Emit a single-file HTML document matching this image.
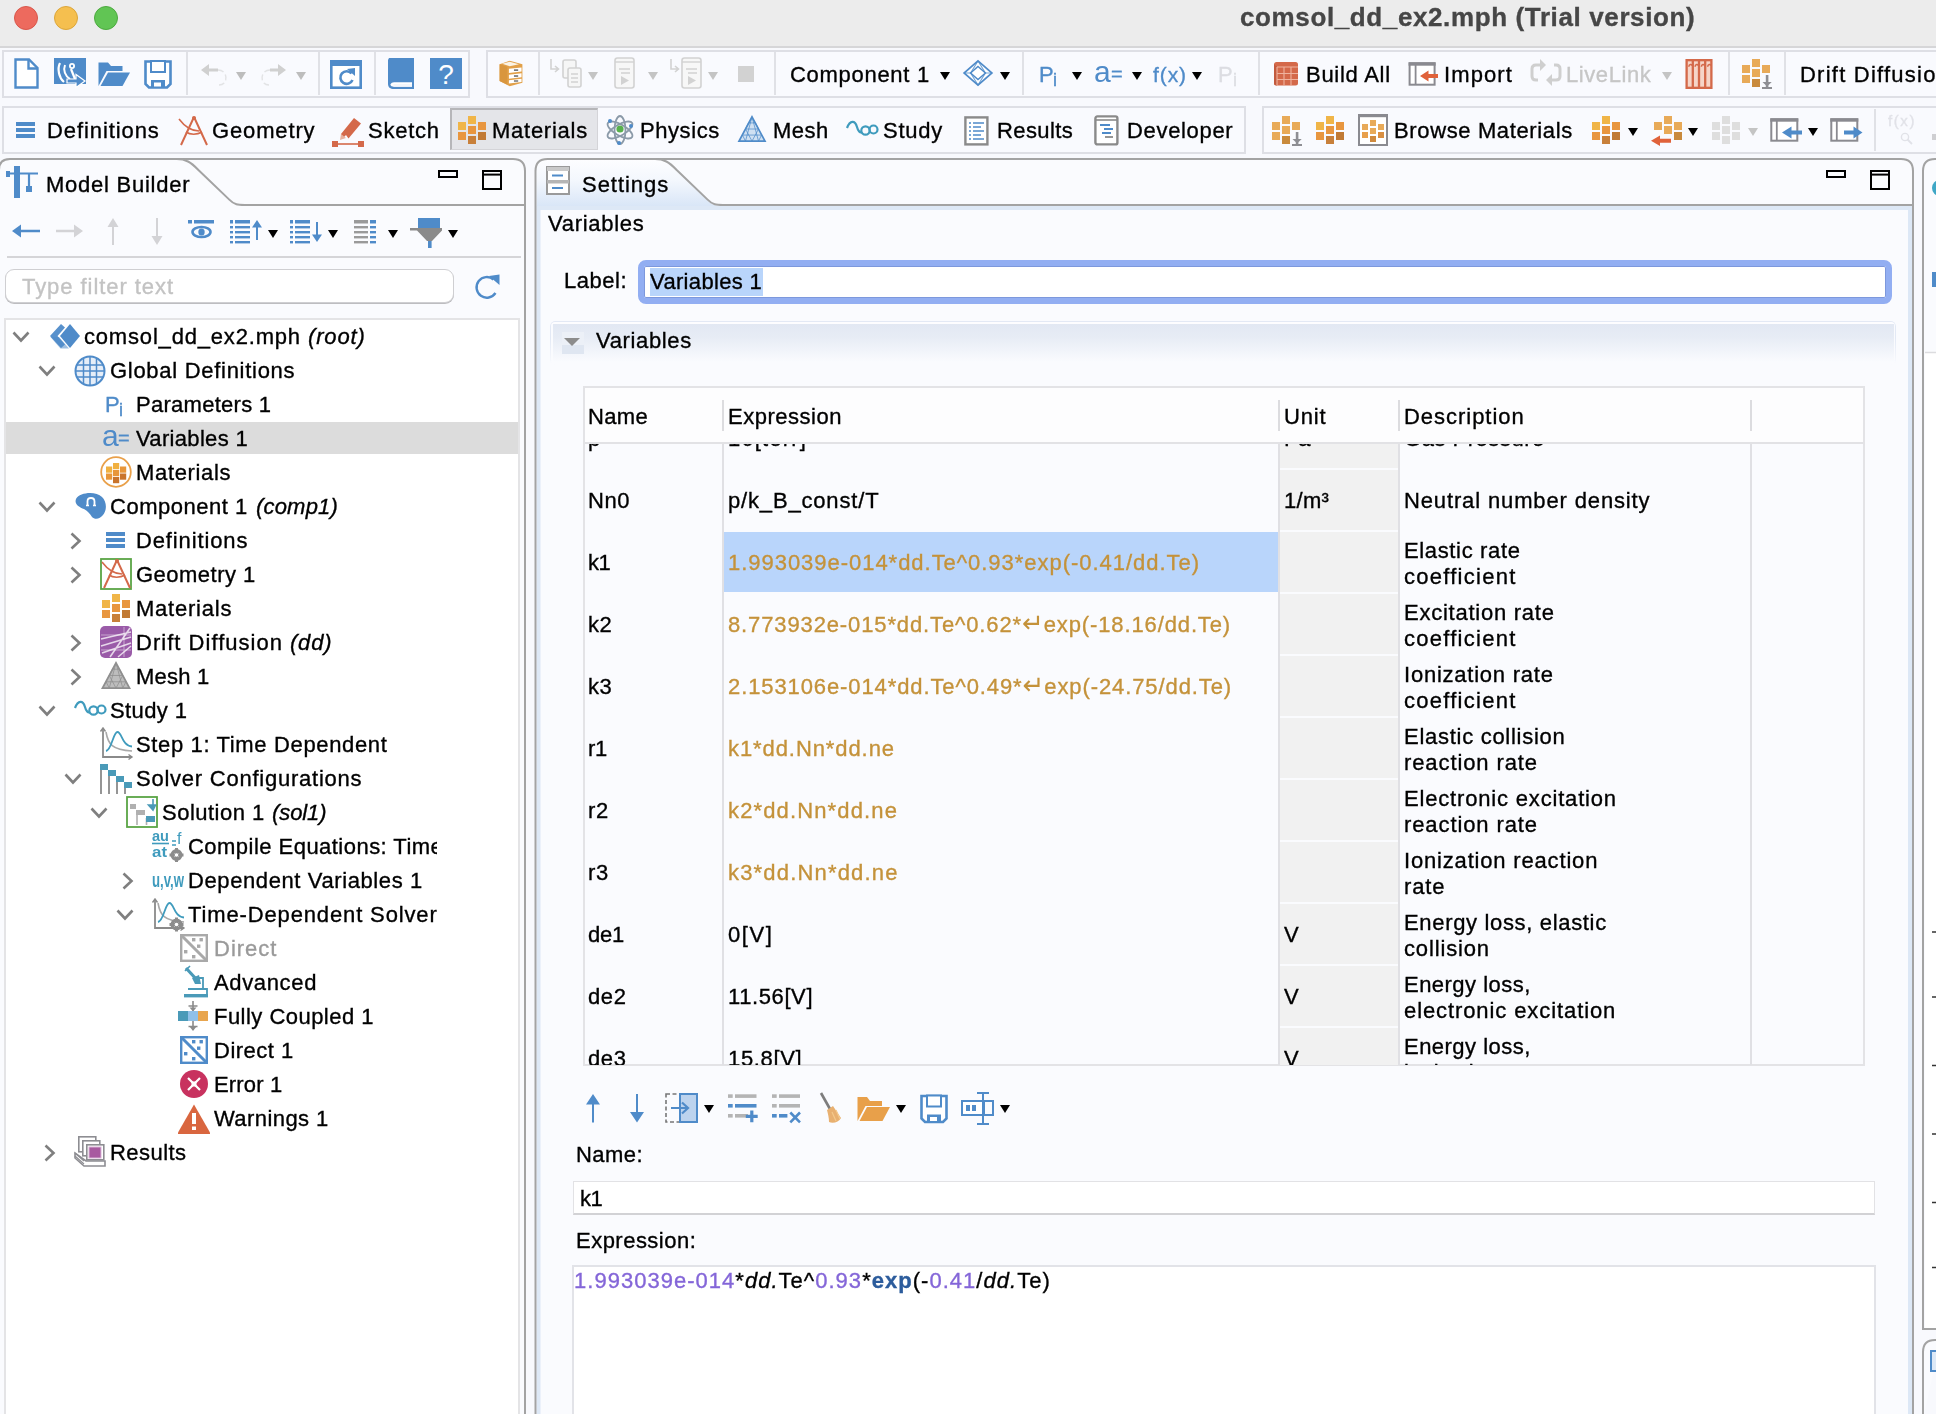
<!DOCTYPE html>
<html><head><meta charset="utf-8"><title>comsol_dd_ex2.mph</title>
<style>html,body{margin:0;padding:0;width:1936px;height:1414px;overflow:hidden;}#root{width:1936px;height:1414px;overflow:hidden;background:#f8f9fd;position:relative;font-family:"Liberation Sans", sans-serif;}.a{position:absolute;}.t{white-space:pre;-webkit-text-stroke:0.35px;will-change:transform;}svg{overflow:visible;display:block;}</style></head>
<body>
<div id="root">
<div class="a" style="left:0px;top:0px;width:1936px;height:46px;background:#ececec;"></div>
<div class="a" style="left:0px;top:46px;width:1936px;height:2px;background:#d6d6d8;"></div>
<div class="a" style="left:14px;top:6px;width:24px;height:24px;background:#ed6a5e;border:1px solid #d9574b;border-radius:50%;box-sizing:border-box;"></div>
<div class="a" style="left:54px;top:6px;width:24px;height:24px;background:#f5bf4f;border:1px solid #dca63a;border-radius:50%;box-sizing:border-box;"></div>
<div class="a" style="left:94px;top:6px;width:24px;height:24px;background:#61c554;border:1px solid #4caa3f;border-radius:50%;box-sizing:border-box;"></div>
<span class="a t" id="t0" style="left:1239.80px;top:-0.01px;font-size:26px;line-height:34px;color:#464646;letter-spacing:0.618px;font-weight:bold;">comsol_dd_ex2.mph (Trial version)</span>
<div class="a" style="left:2px;top:50px;width:468px;height:48px;background:#f9fafe;border:2px solid #dedfe5;box-sizing:border-box;"></div>
<div class="a" style="left:486px;top:50px;width:1470px;height:48px;background:#f9fafe;border:2px solid #dedfe5;box-sizing:border-box;"></div>
<div class="a" style="left:186px;top:52px;width:2px;height:43px;background:#e0e1e6;"></div>
<div class="a" style="left:318px;top:52px;width:2px;height:43px;background:#e0e1e6;"></div>
<div class="a" style="left:374px;top:52px;width:2px;height:43px;background:#e0e1e6;"></div>
<div class="a" style="left:538px;top:52px;width:2px;height:43px;background:#e0e1e6;"></div>
<div class="a" style="left:774px;top:52px;width:2px;height:43px;background:#e0e1e6;"></div>
<div class="a" style="left:1022px;top:52px;width:2px;height:43px;background:#e0e1e6;"></div>
<div class="a" style="left:1258px;top:52px;width:2px;height:43px;background:#e0e1e6;"></div>
<div class="a" style="left:1728px;top:52px;width:2px;height:43px;background:#e0e1e6;"></div>
<div class="a" style="left:1784px;top:52px;width:2px;height:43px;background:#e0e1e6;"></div>
<svg class="a" style="left:10px;top:57px;" width="32" height="32" viewBox="0 0 32 32"><path d="M5.5 2.5H19L27.5 11V30.5H5.5Z" fill="#fff" stroke="#4f8bc9" stroke-width="2.4"/><path d="M18.5 2.5V11.5H27.5" fill="none" stroke="#4f8bc9" stroke-width="2.4"/></svg>
<svg class="a" style="left:54px;top:57px;" width="32" height="32" viewBox="0 0 32 32"><rect x="0" y="1" width="32" height="26" fill="#4f8bc9"/><path d="M6 6C3 12 5 21 10 25" fill="none" stroke="#fff" stroke-width="2.2"/><path d="M11 8C9 13 11 19 16 22" fill="none" stroke="#fff" stroke-width="2"/><circle cx="18" cy="9" r="3" fill="#fff"/><circle cx="18" cy="9" r="1.2" fill="#4f8bc9"/><path d="M17 12L21 22" stroke="#fff" stroke-width="2.2"/><path d="M13 22H22V17.5L31 24L22 30.5V26H13Z" fill="#4f8bc9" stroke="#fff" stroke-width="1.2"/></svg>
<svg class="a" style="left:98px;top:57px;" width="32" height="32" viewBox="0 0 32 32"><path d="M0.5 29V5.5H10L13 9H24.5V14H8.5Z" fill="#4f8bc9"/><path d="M2.5 29L10 15.5H32L24.5 29Z" fill="#4f8bc9"/></svg>
<svg class="a" style="left:142px;top:57px;" width="32" height="32" viewBox="0 0 32 32"><path d="M3.5 4.5H28.5V27L25 30.5H7L3.5 27Z" fill="#fff" stroke="#4f8bc9" stroke-width="2.6"/><rect x="9" y="4" width="14" height="11" fill="#fff" stroke="#4f8bc9" stroke-width="2"/><rect x="9" y="23" width="14" height="7" fill="#4f8bc9"/><rect x="12" y="25.5" width="7" height="4" fill="#fff"/></svg>
<svg class="a" style="left:199px;top:60px;" width="32" height="32" viewBox="0 0 32 32"><path d="M2 10L10 4V8.5H19V11.5H10V16Z" fill="#d0d0d0"/><path d="M19 10C29 10 30 25 20 25" fill="none" stroke="#d0d0d0" stroke-width="1.4" stroke-dasharray="6 3" opacity=".55"/></svg>
<svg class="a" style="left:236px;top:72px;" width="10" height="8" viewBox="0 0 10 8"><path d="M0 0H10L5 8Z" fill="#bdbdbd"/></svg>
<svg class="a" style="left:258px;top:60px;" width="32" height="32" viewBox="0 0 32 32"><path d="M28 10L20 4V8.5H12V11.5H20V16Z" fill="#d0d0d0"/><path d="M12 10C2 10 1 25 11 25" fill="none" stroke="#d0d0d0" stroke-width="1.4" stroke-dasharray="6 3" opacity=".55"/></svg>
<svg class="a" style="left:296px;top:72px;" width="10" height="8" viewBox="0 0 10 8"><path d="M0 0H10L5 8Z" fill="#bdbdbd"/></svg>
<svg class="a" style="left:330px;top:57px;" width="32" height="32" viewBox="0 0 32 32"><rect x="1.3" y="4.3" width="29.4" height="26.4" fill="#fff" stroke="#4f8bc9" stroke-width="2.6"/><rect x="1" y="4" width="30" height="5" fill="#4f8bc9"/><path d="M21.5 16.5A6.3 6.3 0 1 0 22.5 23" fill="none" stroke="#4f8bc9" stroke-width="2.6"/><path d="M17 12L25 11V19Z" fill="#4f8bc9"/></svg>
<svg class="a" style="left:385px;top:57px;" width="32" height="32" viewBox="0 0 32 32"><path d="M4 1H29V32H9C5 32 3 30 3 27V3Z" fill="#4f8bc9"/><path d="M5.5 27.5C6 26 7.5 25.3 9 25.3H27V29.7H9C7 29.7 5.5 29 5.5 27.5Z" fill="#fff"/><rect x="8.5" y="27" width="18.5" height="2.7" fill="#f3f6fb"/></svg>
<svg class="a" style="left:430px;top:57px;" width="32" height="32" viewBox="0 0 32 32"><rect x="0" y="1" width="32" height="31" fill="#4f8bc9"/><text x="16" y="27" font-family="Liberation Sans, sans-serif" font-size="28" fill="#fff" text-anchor="middle">?</text></svg>
<svg class="a" style="left:497px;top:59.5px;" width="28" height="27" viewBox="1 1 29 32"><path d="M2 6L14 2L29 6V28L14 32L2 26Z" fill="#e2a048"/><path d="M2 6L11 9V30L2 26Z" fill="#d9963e"/><path d="M5 5.5L14 3L25 6L14 8.5Z" fill="#fbf3e4"/><path d="M13 11.5L28 9.8V14.5L13 16.5Z M13 18.5L28 16.8V21.3L13 23.3Z M13 25L28 23.2V27L13 28.8Z" fill="#fff"/><rect x="19" y="12" width="5" height="2" fill="#777"/><rect x="19" y="19" width="5" height="2" fill="#777"/><rect x="19" y="25" width="5" height="1.8" fill="#777"/></svg>
<svg class="a" style="left:550px;top:57px;" width="32" height="32" viewBox="0 0 32 32"><path d="M1 2V12H8M5 9L8.5 12L5 15" fill="none" stroke="#d2d2d2" stroke-width="1.6"/><rect x="13" y="3" width="13" height="18" rx="2" fill="#f6f6f6" stroke="#d2d2d2" stroke-width="1.6"/><rect x="18" y="11" width="13" height="19" rx="2" fill="#f6f6f6" stroke="#d2d2d2" stroke-width="1.6"/><path d="M21 17H28M21 21H28M21 25H28" stroke="#d2d2d2" stroke-width="1.4"/></svg>
<svg class="a" style="left:588px;top:72px;" width="10" height="8" viewBox="0 0 10 8"><path d="M0 0H10L5 8Z" fill="#c4c4c4"/></svg>
<svg class="a" style="left:609.5px;top:57px;" width="32" height="32" viewBox="0 0 32 32"><rect x="5" y="1" width="19" height="30" rx="2.5" fill="#f7f7f7" stroke="#d2d2d2" stroke-width="1.6"/><path d="M5 5H24" stroke="#d2d2d2" stroke-width="1.4"/><path d="M9 12H20M11 16H20" stroke="#d2d2d2" stroke-width="1.4"/><path d="M11 19V28L19 23.5Z" fill="#d2d2d2"/></svg>
<svg class="a" style="left:648px;top:72px;" width="10" height="8" viewBox="0 0 10 8"><path d="M0 0H10L5 8Z" fill="#c4c4c4"/></svg>
<svg class="a" style="left:670px;top:57px;" width="32" height="32" viewBox="0 0 32 32"><path d="M1 2V12H8M5 9L8.5 12L5 15" fill="none" stroke="#d2d2d2" stroke-width="1.6"/><rect x="12" y="1" width="19" height="30" rx="2.5" fill="#f7f7f7" stroke="#d2d2d2" stroke-width="1.6"/><path d="M12 5H31" stroke="#d2d2d2" stroke-width="1.4"/><path d="M16 12H27M18 16H27" stroke="#d2d2d2" stroke-width="1.4"/><path d="M18 19V28L26 23.5Z" fill="#d2d2d2"/></svg>
<svg class="a" style="left:708px;top:72px;" width="10" height="8" viewBox="0 0 10 8"><path d="M0 0H10L5 8Z" fill="#c4c4c4"/></svg>
<div class="a" style="left:738px;top:66px;width:16px;height:16px;background:#d2d2d2;"></div>
<span class="a t" id="t1" style="left:790.30px;top:59.88px;font-size:22px;line-height:29px;color:#000;letter-spacing:0.705px;">Component 1</span>
<svg class="a" style="left:940px;top:72px;" width="10" height="8" viewBox="0 0 10 8"><path d="M0 0H10L5 8Z" fill="#000"/></svg>
<svg class="a" style="left:962px;top:60px;" width="32" height="26" viewBox="0 2 32 28"><path d="M16 3L31 16L16 29L1 16Z" fill="#fff" stroke="#4f8bc9" stroke-width="1.8"/><path d="M16 9L24 16L16 23L8 16Z" fill="none" stroke="#4f8bc9" stroke-width="1.6"/><path d="M1 16L8 16M24 16H31M16 3L8 16M16 3L24 16M16 29L8 16M16 29L24 16" stroke="#4f8bc9" stroke-width="1.2" opacity=".8"/></svg>
<svg class="a" style="left:1000px;top:72px;" width="10" height="8" viewBox="0 0 10 8"><path d="M0 0H10L5 8Z" fill="#000"/></svg>
<span class="a t" id="t2" style="left:1038.80px;top:59.88px;font-size:22px;line-height:29px;color:#4f8bc9;letter-spacing:0.000px;">P</span>
<span class="a t" id="t3" style="left:1053.30px;top:69.26px;font-size:18px;line-height:23px;color:#4f8bc9;letter-spacing:0.000px;">i</span>
<svg class="a" style="left:1072px;top:72px;" width="10" height="8" viewBox="0 0 10 8"><path d="M0 0H10L5 8Z" fill="#000"/></svg>
<span class="a t" id="t4" style="left:1094.30px;top:52.10px;font-size:30px;line-height:39px;color:#4f8bc9;letter-spacing:0.000px;-webkit-text-stroke:0;">a</span>
<span class="a t" id="t5" style="left:1111.30px;top:61.07px;font-size:20px;line-height:26px;color:#4f8bc9;letter-spacing:0.000px;">=</span>
<svg class="a" style="left:1132px;top:72px;" width="10" height="8" viewBox="0 0 10 8"><path d="M0 0H10L5 8Z" fill="#000"/></svg>
<span class="a t" id="t6" style="left:1153.30px;top:61.22px;font-size:21px;line-height:27px;color:#4f8bc9;letter-spacing:0.906px;">f(x)</span>
<svg class="a" style="left:1192px;top:72px;" width="10" height="8" viewBox="0 0 10 8"><path d="M0 0H10L5 8Z" fill="#000"/></svg>
<span class="a t" id="t7" style="left:1218.30px;top:59.88px;font-size:22px;line-height:29px;color:#dcdde2;letter-spacing:0.000px;">P</span>
<span class="a t" id="t8" style="left:1232.80px;top:69.26px;font-size:18px;line-height:23px;color:#dcdde2;letter-spacing:0.000px;">i</span>
<svg class="a" style="left:1274.3px;top:62.3px;" width="24" height="24" viewBox="0 0 24 24"><rect x="0" y="0" width="24" height="23.5" rx="2.5" fill="#d4694a"/><path d="M0 2L3 5V23.5H2.5Q0 23.5 0 21Z" fill="#c25a3e"/><path d="M3 5H24M3 11.5H24M3 17.5H24M10 5V23.5M17 5V23.5M3 5V23.5" stroke="#efb39e" stroke-width="1.1" fill="none"/></svg>
<span class="a t" id="t9" style="left:1306.30px;top:59.88px;font-size:22px;line-height:29px;color:#000;letter-spacing:0.732px;">Build All</span>
<svg class="a" style="left:1407px;top:57px;" width="32" height="32" viewBox="0 0 32 32"><rect x="2.6" y="6.3" width="25" height="21.4" fill="#fff" stroke="#8a8a90" stroke-width="2"/><rect x="1.6" y="5.3" width="27" height="3.4" fill="#8a8a90"/><path d="M8.6 8V28" stroke="#8a8a90" stroke-width="1.8"/><path d="M31 17.1H21.5V13.6L13 19.1L21.5 24.6V21.1H31Z" fill="#e0623a"/></svg>
<span class="a t" id="t10" style="left:1444.30px;top:59.88px;font-size:22px;line-height:29px;color:#000;letter-spacing:1.116px;">Import</span>
<svg class="a" style="left:1530px;top:57px;" width="32" height="32" viewBox="0 0 32 32"><path d="M14 8H6Q2 8 2 12V19Q2 23 6 23H8" fill="none" stroke="#cfcfcf" stroke-width="3"/><path d="M10 2L16 8L10 14Z" fill="#cfcfcf"/><path d="M18 23H26Q30 23 30 19V12Q30 8 26 8H24" fill="none" stroke="#cfcfcf" stroke-width="3"/><path d="M22 17L16 23L22 29Z" fill="#cfcfcf"/></svg>
<span class="a t" id="t11" style="left:1566.30px;top:59.88px;font-size:22px;line-height:29px;color:#c6c6c6;letter-spacing:0.571px;">LiveLink</span>
<svg class="a" style="left:1662px;top:72px;" width="10" height="8" viewBox="0 0 10 8"><path d="M0 0H10L5 8Z" fill="#c4c4c4"/></svg>
<svg class="a" style="left:1685px;top:59px;" width="28" height="30" viewBox="0 0 28 31"><rect x="1.2" y="1.2" width="25.6" height="28.6" fill="#f6d5c8" stroke="#d4694a" stroke-width="2.4"/><path d="M7.6 1V30" stroke="#d4694a" stroke-width="2.4"/><path d="M14 1V30" stroke="#d4694a" stroke-width="2.4"/><path d="M20.4 1V30" stroke="#d4694a" stroke-width="2.4"/><path d="M3.5 8C3.5 5 6.5 5 6.5 7" stroke="#d4694a" stroke-width="1.6" fill="none"/><path d="M10 8C10 5 13 5 13 7" stroke="#d4694a" stroke-width="1.6" fill="none"/><path d="M16.5 8C16.5 5 19.5 5 19.5 7" stroke="#d4694a" stroke-width="1.6" fill="none"/><path d="M23 8C23 5 26 5 26 7" stroke="#d4694a" stroke-width="1.6" fill="none"/></svg>
<svg class="a" style="left:1742px;top:59px;" width="32" height="32" viewBox="0 0 32 32"><rect x="0" y="6" width="8" height="8" fill="#e8aa58"/><rect x="0" y="16" width="8" height="8" fill="#e8aa58"/><rect x="10" y="0" width="8" height="8" fill="#e8aa58"/><rect x="10" y="10" width="8" height="8" fill="#e8aa58"/><rect x="10" y="20" width="8" height="8" fill="#c98a3c"/><rect x="20" y="6" width="8" height="8" fill="#e8aa58"/><rect x="23.8" y="16" width="2.6" height="8" fill="#8e8e93"/><path d="M20.5 23H29.7L25.1 27.5Z" fill="#8e8e93"/><rect x="20" y="28" width="10" height="2" fill="#8e8e93"/><rect x="23.8" y="26" width="2.6" height="3" fill="#8e8e93"/></svg>
<span class="a t" id="t12" style="left:1800.30px;top:59.88px;font-size:22px;line-height:29px;color:#000;letter-spacing:1.232px;">Drift Diffusion</span>
<div class="a" style="left:2px;top:106px;width:1244px;height:48px;background:#f9fafe;border:2px solid #dedfe5;box-sizing:border-box;"></div>
<div class="a" style="left:1262px;top:106px;width:700px;height:48px;background:#f9fafe;border:2px solid #dedfe5;box-sizing:border-box;"></div>
<div class="a" style="left:1874px;top:109px;width:2px;height:42px;background:#e0e1e6;"></div>
<div class="a" style="left:450px;top:108px;width:148px;height:42px;background:#e4e5e9;border:1px solid #d4d4d8;box-sizing:border-box;border-top:2px solid #b6b6b9;border-left:2px solid #b6b6b9;"></div>
<svg class="a" style="left:15.5px;top:122px;" width="19" height="16" viewBox="0 0 19 16"><rect x="0" y="0" width="19" height="4" fill="#4f8bc9"/><rect x="0" y="6" width="19" height="4" fill="#4f8bc9"/><rect x="0" y="12" width="19" height="4" fill="#4f8bc9"/></svg>
<span class="a t" id="t13" style="left:46.80px;top:115.88px;font-size:22px;line-height:29px;color:#000;letter-spacing:0.912px;">Definitions</span>
<svg class="a" style="left:177px;top:114.5px;" width="32" height="32" viewBox="0 0 32 32"><path d="M2 4C8 12 14 16 22 16" fill="none" stroke="#d4694a" stroke-width="1.6"/><path d="M17 2L4 30M17 2L30 30" fill="none" stroke="#d4694a" stroke-width="2"/><path d="M9 17C13 20 20 20 25 17" fill="none" stroke="#d4694a" stroke-width="1.6"/><circle cx="17" cy="3" r="2" fill="#d4694a"/></svg>
<span class="a t" id="t14" style="left:212.30px;top:115.88px;font-size:22px;line-height:29px;color:#000;letter-spacing:0.854px;">Geometry</span>
<svg class="a" style="left:332px;top:114.5px;" width="32" height="32" viewBox="0 0 32 32"><path d="M14 20L10 24L9 19L22 3L29 8.5L16.5 23.5Z" fill="#d4694a"/><path d="M9 19L8 25L14 23Z" fill="#e8b29f"/><path d="M3 29H29" stroke="#d4694a" stroke-width="1.6"/><rect x="0" y="26" width="6" height="6" fill="#d4694a"/><rect x="26" y="26" width="6" height="6" fill="#d4694a"/></svg>
<span class="a t" id="t15" style="left:368.10px;top:115.88px;font-size:22px;line-height:29px;color:#000;letter-spacing:0.770px;">Sketch</span>
<svg class="a" style="left:457.5px;top:116px;" width="32" height="32" viewBox="0 0 32 32"><rect x="0" y="6" width="8" height="8" fill="#f0b548"/><rect x="0" y="16" width="8" height="8" fill="#e8963f"/><rect x="10" y="0" width="8" height="8" fill="#f0b548"/><rect x="10" y="10" width="8" height="8" fill="#e8963f"/><rect x="10" y="20" width="8" height="8" fill="#c8803a"/><rect x="20" y="6" width="8" height="8" fill="#e8963f"/><rect x="20" y="16" width="8" height="8" fill="#c17a34"/></svg>
<span class="a t" id="t16" style="left:492.30px;top:115.88px;font-size:22px;line-height:29px;color:#000;letter-spacing:0.735px;">Materials</span>
<svg class="a" style="left:605px;top:114px;" width="30" height="32" viewBox="0 0 30 32"><ellipse cx="15" cy="16" rx="14" ry="5.5" fill="none" stroke="#8b9aa8" stroke-width="1.8" transform="rotate(30 15 16)"/><ellipse cx="15" cy="16" rx="14" ry="5.5" fill="none" stroke="#8b9aa8" stroke-width="1.8" transform="rotate(-30 15 16)"/><ellipse cx="15" cy="16" rx="5.5" ry="14" fill="none" stroke="#8b9aa8" stroke-width="1.8"/><circle cx="15" cy="15" r="3.6" fill="#58b04c"/><circle cx="5" cy="7" r="2" fill="#4f8bc9"/><circle cx="26" cy="12" r="2" fill="#4f8bc9"/><circle cx="14" cy="29" r="2" fill="#4f8bc9"/></svg>
<span class="a t" id="t17" style="left:640.30px;top:115.88px;font-size:22px;line-height:29px;color:#000;letter-spacing:0.570px;">Physics</span>
<svg class="a" style="left:736px;top:116px;" width="32" height="26" viewBox="0 1 32 30"><path d="M16 2L31 30H1Z" fill="#cfe0f2" stroke="#4f8bc9" stroke-width="2"/><path d="M8.5 16H23.5M16 2L8.5 30M16 2L23.5 30M8.5 16L16 30L23.5 16M5 23H27M12 9H20M5 23L8.5 30M27 23L23.5 30M12 9L8.5 16M20 9L23.5 16" stroke="#4f8bc9" stroke-width="1" fill="none" opacity=".85"/></svg>
<span class="a t" id="t18" style="left:773.30px;top:115.88px;font-size:22px;line-height:29px;color:#000;letter-spacing:0.487px;">Mesh</span>
<svg class="a" style="left:846px;top:114px;" width="32" height="32" viewBox="0 0 32 32"><path d="M1 14C4 6 9 6 11 13C12 17 14 19 16 18" fill="none" stroke="#3f9bbd" stroke-width="2.2"/><circle cx="19.5" cy="16.5" r="4.2" fill="none" stroke="#3f9bbd" stroke-width="2.2"/><circle cx="27.5" cy="15.5" r="4" fill="none" stroke="#3f9bbd" stroke-width="2.2"/></svg>
<span class="a t" id="t19" style="left:883.30px;top:115.88px;font-size:22px;line-height:29px;color:#000;letter-spacing:0.719px;">Study</span>
<svg class="a" style="left:964px;top:116px;" width="25" height="30" viewBox="0 0 25 30"><rect x="1.4" y="1.4" width="22" height="27" fill="#fff" stroke="#8a8a8a" stroke-width="2.4"/><path d="M5 7H7M9 7H20" stroke="#4f8bc9" stroke-width="1.6"/><path d="M5 11H7M9 11H17" stroke="#4f8bc9" stroke-width="1.6"/><path d="M5 15H7M9 15H20" stroke="#4f8bc9" stroke-width="1.6"/><path d="M5 19H7M9 19H17" stroke="#4f8bc9" stroke-width="1.6"/><path d="M5 23H7M9 23H20" stroke="#4f8bc9" stroke-width="1.6"/></svg>
<span class="a t" id="t20" style="left:996.80px;top:115.88px;font-size:22px;line-height:29px;color:#000;letter-spacing:0.406px;">Results</span>
<svg class="a" style="left:1094px;top:115px;" width="25" height="31" viewBox="0 0 25 31"><rect x="1.4" y="1.4" width="22" height="28" rx="2" fill="#fff" stroke="#8a8a8a" stroke-width="2.4"/><path d="M1 5H24" stroke="#8a8a8a" stroke-width="1.6"/><path d="M6 10H16M10 14H19M8 18H17" stroke="#4f8bc9" stroke-width="1.8"/><path d="M11 22H19" stroke="#8a8a8a" stroke-width="1.8"/></svg>
<span class="a t" id="t21" style="left:1126.80px;top:115.88px;font-size:22px;line-height:29px;color:#000;letter-spacing:0.673px;">Developer</span>
<svg class="a" style="left:1272px;top:116px;" width="32" height="32" viewBox="0 0 32 32"><rect x="0" y="6" width="8" height="8" fill="#e8aa58"/><rect x="0" y="16" width="8" height="8" fill="#e8aa58"/><rect x="10" y="0" width="8" height="8" fill="#e8aa58"/><rect x="10" y="10" width="8" height="8" fill="#e8aa58"/><rect x="10" y="20" width="8" height="8" fill="#c98a3c"/><rect x="20" y="6" width="8" height="8" fill="#e8aa58"/><rect x="23.8" y="16" width="2.6" height="8" fill="#8e8e93"/><path d="M20.5 23H29.7L25.1 27.5Z" fill="#8e8e93"/><rect x="20" y="28" width="10" height="2" fill="#8e8e93"/><rect x="23.8" y="26" width="2.6" height="3" fill="#8e8e93"/></svg>
<svg class="a" style="left:1316px;top:116px;" width="32" height="32" viewBox="0 0 32 32"><rect x="0" y="6" width="8" height="8" fill="#f0b548"/><rect x="0" y="16" width="8" height="8" fill="#e8963f"/><rect x="10" y="0" width="8" height="8" fill="#f0b548"/><rect x="10" y="10" width="8" height="8" fill="#e8963f"/><rect x="10" y="20" width="8" height="8" fill="#c8803a"/><rect x="20" y="6" width="8" height="8" fill="#e8963f"/><rect x="20" y="16" width="8" height="8" fill="#c17a34"/></svg>
<svg class="a" style="left:1358px;top:114.3px;" width="32" height="32" viewBox="0 0 32 32"><rect x="1" y="1" width="28" height="30" fill="#fff" stroke="#8a8a90" stroke-width="2"/><rect x="0" y="0" width="30" height="3.2" fill="#8a8a90"/><rect x="4" y="10" width="6" height="6" fill="#e8aa58"/><rect x="4" y="18" width="6" height="6" fill="#e8a04c"/><rect x="12" y="6" width="6" height="6" fill="#e8aa58"/><rect x="12" y="14" width="6" height="6" fill="#e8aa58"/><rect x="12" y="22" width="6" height="6" fill="#cf8a3e"/><rect x="20" y="10" width="6" height="6" fill="#e8aa58"/><rect x="20" y="18" width="6" height="6" fill="#d98f42"/></svg>
<span class="a t" id="t22" style="left:1394.30px;top:115.88px;font-size:22px;line-height:29px;color:#000;letter-spacing:0.631px;">Browse Materials</span>
<svg class="a" style="left:1592px;top:116px;" width="32" height="32" viewBox="0 0 32 32"><rect x="0" y="6" width="8" height="8" fill="#f0b548"/><rect x="0" y="16" width="8" height="8" fill="#e8963f"/><rect x="10" y="0" width="8" height="8" fill="#f0b548"/><rect x="10" y="10" width="8" height="8" fill="#e8963f"/><rect x="10" y="20" width="8" height="8" fill="#c8803a"/><rect x="20" y="6" width="8" height="8" fill="#e8963f"/><rect x="20" y="16" width="8" height="8" fill="#c17a34"/></svg>
<svg class="a" style="left:1628px;top:128px;" width="10" height="8" viewBox="0 0 10 8"><path d="M0 0H10L5 8Z" fill="#000"/></svg>
<svg class="a" style="left:1651.5px;top:116px;" width="32" height="32" viewBox="0 0 32 32"><rect x="2" y="6" width="8" height="8" fill="#e8aa58"/><rect x="12" y="0" width="8" height="8" fill="#e8aa58"/><rect x="12" y="10" width="8" height="8" fill="#e8aa58"/><rect x="22" y="6" width="8" height="8" fill="#e8aa58"/><rect x="22" y="16" width="8" height="8" fill="#c98a3c"/><path d="M19 22.7H8V19.5L-1 24.7L8 30V26.7H19Z" fill="#e0623a"/></svg>
<svg class="a" style="left:1688px;top:128px;" width="10" height="8" viewBox="0 0 10 8"><path d="M0 0H10L5 8Z" fill="#000"/></svg>
<svg class="a" style="left:1712px;top:116px;" width="32" height="32" viewBox="0 0 32 32"><rect x="0" y="6" width="8" height="8" fill="#dedede"/><rect x="0" y="16" width="8" height="8" fill="#dedede"/><rect x="10" y="0" width="8" height="8" fill="#dedede"/><rect x="10" y="10" width="8" height="8" fill="#dedede"/><rect x="10" y="20" width="8" height="8" fill="#dedede"/><rect x="20" y="6" width="8" height="8" fill="#dedede"/><rect x="20" y="16" width="8" height="8" fill="#dedede"/></svg>
<svg class="a" style="left:1748px;top:128px;" width="10" height="8" viewBox="0 0 10 8"><path d="M0 0H10L5 8Z" fill="#c4c4c4"/></svg>
<svg class="a" style="left:1770px;top:114px;" width="32" height="32" viewBox="0 0 32 32"><rect x="1.3" y="5.3" width="26" height="21.4" fill="#fff" stroke="#8a8a90" stroke-width="2"/><rect x="0.3" y="4.3" width="28" height="3.4" fill="#8a8a90"/><path d="M6.8 7V27" stroke="#8a8a90" stroke-width="1.8"/><path d="M32 16.4H21.5V12.6L12 18.5L21.5 24.4V20.6H32Z" fill="#4f8bc9"/></svg>
<svg class="a" style="left:1808px;top:128px;" width="10" height="8" viewBox="0 0 10 8"><path d="M0 0H10L5 8Z" fill="#000"/></svg>
<svg class="a" style="left:1830.2px;top:114px;" width="32" height="32" viewBox="0 0 32 32"><rect x="1.3" y="5.3" width="26" height="21.4" fill="#fff" stroke="#8a8a90" stroke-width="2"/><rect x="0.3" y="4.3" width="28" height="3.4" fill="#8a8a90"/><path d="M6.8 7V27" stroke="#8a8a90" stroke-width="1.8"/><path d="M14 16.4H23.5V12.6L32.5 18.5L23.5 24.4V20.6H14Z" fill="#4f8bc9"/></svg>
<span class="a t" id="t23" style="left:1888.30px;top:110.80px;font-size:15px;line-height:20px;color:#e1e2e8;letter-spacing:1.600px;">f(x)</span>
<svg class="a" style="left:1900px;top:132px;" width="14" height="13" viewBox="0 0 14 13"><circle cx="5" cy="5" r="3.6" fill="none" stroke="#e1e2e8" stroke-width="1.4"/><path d="M7.5 7.5L12 12" stroke="#e1e2e8" stroke-width="1.8"/></svg>
<div class="a" style="left:1932px;top:134px;width:6px;height:6px;background:#cfcfd2;"></div>
<svg class="a" style="left:0;top:150px" width="540" height="1270" viewBox="0 150 540 1270"><path d="M-1 1420V170Q-1 159 10 159H513Q525 159 525 171V1420Z" fill="#fafbfe"/><path d="M-1 1420V170Q-1 159 10 159H513Q525 159 525 171V1420" fill="none" stroke="#a3a3a3" stroke-width="2"/><path d="M176.7 159C185.7 159 190.7 162 198.39999999999998 170 L229.29999999999998 199.6 C234.7 205 237.7 205 244.7 205H525" fill="none" stroke="#a3a3a3" stroke-width="2"/></svg>
<svg class="a" style="left:6px;top:166px;" width="32" height="32" viewBox="0 0 32 32"><rect x="8" y="0" width="6" height="32" fill="#4f8bc9"/><rect x="0" y="5" width="4" height="6" fill="#4f8bc9"/><path d="M3 7.5H9" stroke="#4f8bc9" stroke-width="2"/><path d="M14 7.5H32M23 7.5V20" stroke="#4f8bc9" stroke-width="2.2" fill="none"/><rect x="20" y="20" width="6" height="6" fill="#4f8bc9"/></svg>
<span class="a t" id="t24" style="left:46.30px;top:169.88px;font-size:22px;line-height:29px;color:#000;letter-spacing:0.751px;">Model Builder</span>
<svg class="a" style="left:438px;top:168px;" width="70" height="26" viewBox="0 0 70 26"><rect x="1" y="3" width="18" height="6" fill="none" stroke="#000" stroke-width="2"/><rect x="45" y="3" width="18" height="18" fill="none" stroke="#000" stroke-width="2"/><path d="M45 6.6H63" stroke="#000" stroke-width="2"/></svg>
<svg class="a" style="left:10px;top:216px;" width="160" height="34" viewBox="0 0 160 34"><path d="M2 15L11 8.5V13.8H30V16.2H11V21.5Z" fill="#4f8bc9"/><path d="M73 15L64 8.5V13.8H46V16.2H64V21.5Z" fill="#d3d3d6"/><path d="M103 2L97.5 11H102V29H104V11H108.5Z" fill="#d3d3d6"/><path d="M147 29L141.5 20H146V2H148V20H152.5Z" fill="#d3d3d6"/></svg>
<svg class="a" style="left:188px;top:218px;" width="28" height="24" viewBox="0 0 28 24"><rect x="0" y="2" width="4" height="3.5" fill="#4f8bc9"/><rect x="6" y="2" width="20" height="3.5" fill="#4f8bc9"/><ellipse cx="13.5" cy="14" rx="9" ry="5" fill="none" stroke="#4f8bc9" stroke-width="2.6"/><ellipse cx="13.5" cy="14" rx="3.2" ry="3.5" fill="#4f8bc9"/></svg>
<svg class="a" style="left:230px;top:219px;" width="33" height="26" viewBox="0 0 33 26"><rect x="0" y="1" width="3" height="3.5" fill="#4f8bc9"/><rect x="5" y="1" width="15" height="3.5" fill="#4f8bc9"/><rect x="0" y="7" width="3" height="2.4" fill="#4f8bc9"/><rect x="5" y="7" width="15" height="2.4" fill="#4f8bc9"/><rect x="0" y="12" width="3" height="2.4" fill="#4f8bc9"/><rect x="5" y="12" width="15" height="2.4" fill="#4f8bc9"/><rect x="0" y="17" width="3" height="2.4" fill="#4f8bc9"/><rect x="5" y="17" width="15" height="2.4" fill="#4f8bc9"/><rect x="0" y="22" width="3" height="2.4" fill="#4f8bc9"/><rect x="5" y="22" width="15" height="2.4" fill="#4f8bc9"/><path d="M27 1L22 8.5H26V21H28V8.5H32Z" fill="#4f8bc9"/></svg>
<svg class="a" style="left:268px;top:230px;" width="10" height="8" viewBox="0 0 10 8"><path d="M0 0H10L5 8Z" fill="#000"/></svg>
<svg class="a" style="left:290px;top:219px;" width="33" height="26" viewBox="0 0 33 26"><rect x="0" y="1" width="3" height="3.5" fill="#4f8bc9"/><rect x="5" y="1" width="15" height="3.5" fill="#4f8bc9"/><rect x="0" y="7" width="3" height="2.4" fill="#4f8bc9"/><rect x="5" y="7" width="15" height="2.4" fill="#4f8bc9"/><rect x="0" y="12" width="3" height="2.4" fill="#4f8bc9"/><rect x="5" y="12" width="15" height="2.4" fill="#4f8bc9"/><rect x="0" y="17" width="3" height="2.4" fill="#4f8bc9"/><rect x="5" y="17" width="15" height="2.4" fill="#4f8bc9"/><rect x="0" y="22" width="3" height="2.4" fill="#4f8bc9"/><rect x="5" y="22" width="15" height="2.4" fill="#4f8bc9"/><path d="M27 23L22 15.5H26V3H28V15.5H32Z" fill="#4f8bc9"/></svg>
<svg class="a" style="left:328px;top:230px;" width="10" height="8" viewBox="0 0 10 8"><path d="M0 0H10L5 8Z" fill="#000"/></svg>
<svg class="a" style="left:354px;top:219px;" width="24" height="26" viewBox="0 0 24 26"><rect x="0" y="1" width="14" height="3.5" fill="#9a9a9a"/><rect x="16" y="1" width="6" height="3.5" fill="#4f8bc9"/><rect x="0" y="7" width="14" height="2.4" fill="#9a9a9a"/><rect x="16" y="7" width="6" height="2.4" fill="#4f8bc9"/><rect x="0" y="12" width="14" height="2.4" fill="#9a9a9a"/><rect x="16" y="12" width="6" height="2.4" fill="#4f8bc9"/><rect x="0" y="17" width="14" height="2.4" fill="#9a9a9a"/><rect x="16" y="17" width="6" height="2.4" fill="#4f8bc9"/><rect x="0" y="22" width="14" height="2.4" fill="#9a9a9a"/><rect x="16" y="22" width="6" height="2.4" fill="#4f8bc9"/></svg>
<svg class="a" style="left:388px;top:230px;" width="10" height="8" viewBox="0 0 10 8"><path d="M0 0H10L5 8Z" fill="#000"/></svg>
<svg class="a" style="left:410px;top:217px;" width="33" height="32" viewBox="0 0 33 32"><rect x="8" y="1" width="22" height="10" fill="#4f8bc9"/><path d="M0 11H32V13.5L22 24H17L7 13.5H0Z" fill="#8a8a8a"/><rect x="18" y="24" width="3.6" height="7" fill="#4f8bc9"/></svg>
<svg class="a" style="left:448px;top:230px;" width="10" height="8" viewBox="0 0 10 8"><path d="M0 0H10L5 8Z" fill="#000"/></svg>
<div class="a" style="left:7px;top:256px;width:514px;height:2px;background:#d5d5d8;"></div>
<div class="a" style="left:5px;top:269px;width:449px;height:34px;background:#fff;border:1px solid #cfcfd2;border-radius:9px;box-sizing:border-box;box-shadow:0 1px 0 #bdbdc0;"></div>
<span class="a t" id="t25" style="left:22.30px;top:271.88px;font-size:22px;line-height:29px;color:#c3c3c3;letter-spacing:0.939px;">Type filter text</span>
<svg class="a" style="left:471.5px;top:272px;" width="30" height="28" viewBox="0 0 30 28"><path d="M21.5 7.5A10.3 10.3 0 1 0 23.5 21" fill="none" stroke="#4f8bc9" stroke-width="2.4"/><path d="M17 4L27.5 2.5V13Z" fill="#4f8bc9"/></svg>
<div class="a" style="left:4px;top:318px;width:516px;height:1110px;background:#fff;border:2px solid #e4e4e6;box-sizing:border-box;"></div>
<div class="a" style="left:6px;top:422px;width:512px;height:32px;background:#dcdcdc;"></div>
<svg class="a" style="left:12px;top:331px;" width="18" height="12" viewBox="0 0 18 12"><path d="M1.5 1.5L9 9.5L16.5 1.5" fill="none" stroke="#7f7f7f" stroke-width="2.6"/></svg>
<svg class="a" style="left:48px;top:323px;" width="32" height="26" viewBox="0 0 32 26"><path d="M22 1L32 13L22 25L12 13Z" fill="#4f8bc9"/><path d="M13 1L2 13L13 25L17 21.5L9.5 13L17 4.5Z" fill="#4f8bc9" opacity=".95"/><path d="M2.5 14L12.5 25.5L21 25.5L11 14Z" fill="#4f8bc9" opacity=".55"/></svg>
<span class="a t" id="t26" style="left:84.00px;top:321.88px;font-size:22px;line-height:29px;color:#000;letter-spacing:0.817px;">comsol_dd_ex2.mph</span>
<span class="a t" id="t27" style="left:308.30px;top:321.88px;font-size:22px;line-height:29px;color:#000;letter-spacing:0.843px;font-style:italic;">(root)</span>
<svg class="a" style="left:38px;top:365px;" width="18" height="12" viewBox="0 0 18 12"><path d="M1.5 1.5L9 9.5L16.5 1.5" fill="none" stroke="#7f7f7f" stroke-width="2.6"/></svg>
<svg class="a" style="left:74px;top:355px;" width="32" height="32" viewBox="0 0 32 32"><circle cx="16" cy="16" r="14.5" fill="#e6eef8" stroke="#4f8bc9" stroke-width="2"/><path d="M3 10H29M2 16H30M3 22H29M16 1.5V30.5M9.5 3V29M22.5 3V29" stroke="#4f8bc9" stroke-width="1.5" fill="none"/></svg>
<span class="a t" id="t28" style="left:110.30px;top:355.88px;font-size:22px;line-height:29px;color:#000;letter-spacing:0.712px;">Global Definitions</span>
<span class="a t" id="t29" style="left:104.80px;top:389.88px;font-size:22px;line-height:29px;color:#4f8bc9;letter-spacing:0.000px;">P</span>
<span class="a t" id="t30" style="left:119.30px;top:398.76px;font-size:18px;line-height:23px;color:#4f8bc9;letter-spacing:0.000px;">i</span>
<span class="a t" id="t31" style="left:136.30px;top:389.88px;font-size:22px;line-height:29px;color:#000;letter-spacing:0.273px;">Parameters 1</span>
<span class="a t" id="t32" style="left:101.80px;top:416.11px;font-size:30px;line-height:39px;color:#4f8bc9;letter-spacing:0.000px;-webkit-text-stroke:0;">a</span>
<span class="a t" id="t33" style="left:118.30px;top:425.07px;font-size:20px;line-height:26px;color:#4f8bc9;letter-spacing:0.000px;">=</span>
<span class="a t" id="t34" style="left:136.30px;top:423.88px;font-size:22px;line-height:29px;color:#000;letter-spacing:0.320px;">Variables 1</span>
<svg class="a" style="left:100px;top:456px;" width="32" height="32" viewBox="0 0 32 32"><circle cx="16" cy="16" r="14.8" fill="#fff" stroke="#e9a04a" stroke-width="1.8"/><rect x="6" y="10.5" width="6.2" height="6.2" fill="#f0b040"/><rect x="6" y="17.5" width="6.2" height="6.2" fill="#e8963a"/><rect x="13" y="7" width="6.2" height="6.2" fill="#f0b040"/><rect x="13" y="14" width="6.2" height="6.2" fill="#e8963a"/><rect x="13" y="21" width="6.2" height="6.2" fill="#c9742c"/><rect x="20" y="10.5" width="6.2" height="6.2" fill="#e8963a"/><rect x="20" y="17.5" width="6.2" height="6.2" fill="#c9742c"/></svg>
<span class="a t" id="t35" style="left:136.30px;top:457.88px;font-size:22px;line-height:29px;color:#000;letter-spacing:0.665px;">Materials</span>
<svg class="a" style="left:38px;top:501px;" width="18" height="12" viewBox="0 0 18 12"><path d="M1.5 1.5L9 9.5L16.5 1.5" fill="none" stroke="#7f7f7f" stroke-width="2.6"/></svg>
<svg class="a" style="left:74px;top:491.5px;" width="32" height="29" viewBox="0 0 32 29"><path d="M2 7C6 0 22 -1 28 5C33 10 33 18 29 23C26 27 21 28 18 25C16 22 14 19 10 17C5 15 0 12 2 7Z" fill="#4f8bc9"/><path d="M13.5 13V9.5Q13.5 6 17 6Q20.5 6 20.5 9.5V13" fill="none" stroke="#fff" stroke-width="1.8"/><path d="M12 13.5H15M19 13.5H22" stroke="#fff" stroke-width="1.6"/></svg>
<span class="a t" id="t36" style="left:110.30px;top:491.88px;font-size:22px;line-height:29px;color:#000;letter-spacing:0.515px;">Component 1</span>
<span class="a t" id="t37" style="left:256.10px;top:491.88px;font-size:22px;line-height:29px;color:#000;letter-spacing:0.187px;font-style:italic;">(comp1)</span>
<svg class="a" style="left:69.5px;top:532px;" width="12" height="18" viewBox="0 0 12 18"><path d="M1.5 1.5L9.5 9L1.5 16.5" fill="none" stroke="#7f7f7f" stroke-width="2.6"/></svg>
<svg class="a" style="left:105.8px;top:532px;" width="19" height="16" viewBox="0 0 19 16"><rect x="0" y="0" width="19" height="4" fill="#4f8bc9"/><rect x="0" y="6" width="19" height="4" fill="#4f8bc9"/><rect x="0" y="12" width="19" height="4" fill="#4f8bc9"/></svg>
<span class="a t" id="t38" style="left:136.30px;top:525.88px;font-size:22px;line-height:29px;color:#000;letter-spacing:0.874px;">Definitions</span>
<svg class="a" style="left:69.5px;top:566px;" width="12" height="18" viewBox="0 0 12 18"><path d="M1.5 1.5L9.5 9L1.5 16.5" fill="none" stroke="#7f7f7f" stroke-width="2.6"/></svg>
<svg class="a" style="left:100px;top:558px;" width="32" height="32" viewBox="0 0 32 32"><rect x="1" y="1" width="30" height="30" fill="#fff" stroke="#5aa545" stroke-width="1.8"/><path d="M2 4C8 12 14 16 22 16" fill="none" stroke="#d4694a" stroke-width="1.6"/><path d="M17 2L4 30M17 2L30 30" fill="none" stroke="#d4694a" stroke-width="2"/><path d="M9 17C13 20 20 20 25 17" fill="none" stroke="#d4694a" stroke-width="1.6"/><circle cx="17" cy="3" r="2" fill="#d4694a"/></svg>
<span class="a t" id="t39" style="left:136.30px;top:559.88px;font-size:22px;line-height:29px;color:#000;letter-spacing:0.480px;">Geometry 1</span>
<svg class="a" style="left:102px;top:594px;" width="32" height="32" viewBox="0 0 32 32"><rect x="0" y="6" width="8" height="8" fill="#f0b548"/><rect x="0" y="16" width="8" height="8" fill="#e8963f"/><rect x="10" y="0" width="8" height="8" fill="#f0b548"/><rect x="10" y="10" width="8" height="8" fill="#e8963f"/><rect x="10" y="20" width="8" height="8" fill="#c8803a"/><rect x="20" y="6" width="8" height="8" fill="#e8963f"/><rect x="20" y="16" width="8" height="8" fill="#c17a34"/></svg>
<span class="a t" id="t40" style="left:136.30px;top:593.88px;font-size:22px;line-height:29px;color:#000;letter-spacing:0.771px;">Materials</span>
<svg class="a" style="left:69.5px;top:634px;" width="12" height="18" viewBox="0 0 12 18"><path d="M1.5 1.5L9.5 9L1.5 16.5" fill="none" stroke="#7f7f7f" stroke-width="2.6"/></svg>
<svg class="a" style="left:100px;top:626px;" width="32" height="32" viewBox="0 0 32 32"><rect x="0" y="0" width="32" height="32" rx="5" fill="#9a5ba8"/><path d="M1 13L31 6M1 20L31 11M2 27L31 17M10 31L30 2M18 31L31 20" stroke="#fff" stroke-width="1.6" opacity=".75" fill="none"/><path d="M1 9H31M1 24H31M24 1V31" stroke="#fff" stroke-width="1" opacity=".45"/></svg>
<span class="a t" id="t41" style="left:136.30px;top:627.88px;font-size:22px;line-height:29px;color:#000;letter-spacing:1.025px;">Drift Diffusion</span>
<span class="a t" id="t42" style="left:290.30px;top:627.88px;font-size:22px;line-height:29px;color:#000;letter-spacing:0.793px;font-style:italic;">(dd)</span>
<svg class="a" style="left:69.5px;top:668px;" width="12" height="18" viewBox="0 0 12 18"><path d="M1.5 1.5L9.5 9L1.5 16.5" fill="none" stroke="#7f7f7f" stroke-width="2.6"/></svg>
<svg class="a" style="left:100px;top:662px;" width="32" height="27" viewBox="0 1 32 30"><path d="M16 2L31 30H1Z" fill="#bdbdbd" stroke="#8f8f8f" stroke-width="2"/><path d="M8.5 16H23.5M16 2L8.5 30M16 2L23.5 30M8.5 16L16 30L23.5 16M5 23H27M12 9H20M5 23L8.5 30M27 23L23.5 30M12 9L8.5 16M20 9L23.5 16" stroke="#8f8f8f" stroke-width="1" fill="none" opacity=".85"/></svg>
<span class="a t" id="t43" style="left:136.30px;top:661.88px;font-size:22px;line-height:29px;color:#000;letter-spacing:0.226px;">Mesh 1</span>
<svg class="a" style="left:38px;top:705px;" width="18" height="12" viewBox="0 0 18 12"><path d="M1.5 1.5L9 9.5L16.5 1.5" fill="none" stroke="#7f7f7f" stroke-width="2.6"/></svg>
<svg class="a" style="left:73.7px;top:698px;" width="32" height="24" viewBox="0 4 32 24"><path d="M1 14C4 6 9 6 11 13C12 17 14 19 16 18" fill="none" stroke="#3f9bbd" stroke-width="2.2"/><circle cx="19.5" cy="16.5" r="4.2" fill="none" stroke="#3f9bbd" stroke-width="2.2"/><circle cx="27.5" cy="15.5" r="4" fill="none" stroke="#3f9bbd" stroke-width="2.2"/></svg>
<span class="a t" id="t44" style="left:110.30px;top:695.88px;font-size:22px;line-height:29px;color:#000;letter-spacing:0.383px;">Study 1</span>
<svg class="a" style="left:100px;top:728px;" width="32" height="32" viewBox="0 0 32 32"><path d="M3 0V29H32" fill="none" stroke="#8a8a8a" stroke-width="1.8"/><path d="M0.5 3.5L3 0L5.5 3.5M28.5 26.5L32 29L28.5 31.5" fill="none" stroke="#8a8a8a" stroke-width="1.4"/><path d="M6 4C8 16 12 22 32 23" fill="none" stroke="#a9a9a9" stroke-width="1.6"/><path d="M6 23C12 22 13 4 17.5 4C22 4 22 18 32 18.5" fill="none" stroke="#3f9bbd" stroke-width="1.8"/></svg>
<span class="a t" id="t45" style="left:136.30px;top:729.88px;font-size:22px;line-height:29px;color:#000;letter-spacing:0.643px;">Step 1: Time Dependent</span>
<svg class="a" style="left:64px;top:773px;" width="18" height="12" viewBox="0 0 18 12"><path d="M1.5 1.5L9 9.5L16.5 1.5" fill="none" stroke="#7f7f7f" stroke-width="2.6"/></svg>
<svg class="a" style="left:100px;top:764px;" width="32" height="30" viewBox="0 0 32 30"><path d="M1 2V30" stroke="#8a8a8a" stroke-width="1.8"/><rect x="0" y="0" width="8" height="6" fill="#4a9ab8"/><path d="M9 8V30" stroke="#8a8a8a" stroke-width="1.8"/><rect x="8" y="6" width="8" height="6" fill="#4a9ab8"/><path d="M17 14V30" stroke="#8a8a8a" stroke-width="1.8"/><rect x="16" y="12" width="8" height="6" fill="#4a9ab8"/><path d="M25 20V30" stroke="#8a8a8a" stroke-width="1.8"/><rect x="24" y="18" width="8" height="6" fill="#4a9ab8"/></svg>
<span class="a t" id="t46" style="left:136.30px;top:763.88px;font-size:22px;line-height:29px;color:#000;letter-spacing:0.764px;">Solver Configurations</span>
<svg class="a" style="left:90px;top:807px;" width="18" height="12" viewBox="0 0 18 12"><path d="M1.5 1.5L9 9.5L16.5 1.5" fill="none" stroke="#7f7f7f" stroke-width="2.6"/></svg>
<svg class="a" style="left:126px;top:796px;" width="32" height="32" viewBox="0 0 32 32"><rect x="1" y="1" width="30" height="30" fill="#fff" stroke="#5aa545" stroke-width="1.8"/><rect x="4" y="8" width="6" height="5" fill="#b0b0b0"/><rect x="10" y="14" width="9" height="5" fill="#b0b0b0"/><path d="M11 19V29M20.5 22V29" stroke="#b0b0b0" stroke-width="1.6"/><rect x="20" y="20" width="9" height="6" fill="#4a9ab8"/><path d="M27 3V12M22.5 9H29.5L27 14Z" stroke="#4a9ab8" stroke-width="1.6" fill="#4a9ab8"/></svg>
<span class="a t" id="t47" style="left:161.90px;top:797.88px;font-size:22px;line-height:29px;color:#000;letter-spacing:0.488px;">Solution 1</span>
<span class="a t" id="t48" style="left:272.10px;top:797.88px;font-size:22px;line-height:29px;color:#000;letter-spacing:-0.094px;font-style:italic;">(sol1)</span>
<svg class="a" style="left:152px;top:829.5px;" width="32" height="32" viewBox="0 0 32 32"><text x="0" y="10.5" font-family="Liberation Sans, sans-serif" font-size="15" font-weight="bold" fill="#3f9bbd" textLength="17" lengthAdjust="spacingAndGlyphs">au</text><path d="M0 13.5H17" stroke="#3f9bbd" stroke-width="1.6"/><text x="0" y="26.5" font-family="Liberation Sans, sans-serif" font-size="15" font-weight="bold" fill="#3f9bbd" textLength="15" lengthAdjust="spacingAndGlyphs">at</text><path d="M20 11H24M20 15H24" stroke="#3f9bbd" stroke-width="1.5"/><text x="25" y="14" font-family="Liberation Sans, sans-serif" font-size="16" fill="#3f9bbd">f</text><circle cx="24.5" cy="25" r="4.3" fill="none" stroke="#8c8c8c" stroke-width="3.4"/><path d="M24.5 18V32M17.5 25H31.5" stroke="#8c8c8c" stroke-width="3"/><circle cx="24.5" cy="25" r="1.8" fill="#fff"/></svg>
<span class="a t" id="t49" style="left:188.10px;top:831.88px;font-size:22px;line-height:29px;color:#000;letter-spacing:0.467px;width:249.2px;overflow:hidden;">Compile Equations: Time Dependent</span>
<svg class="a" style="left:121.5px;top:872px;" width="12" height="18" viewBox="0 0 12 18"><path d="M1.5 1.5L9.5 9L1.5 16.5" fill="none" stroke="#7f7f7f" stroke-width="2.6"/></svg>
<svg class="a" style="left:152px;top:872px;" width="32" height="18" viewBox="0 0 32 18"><text x="0" y="14.5" font-family="Liberation Sans, sans-serif" font-size="20" font-weight="bold" fill="#3f9bbd" textLength="32" lengthAdjust="spacingAndGlyphs">u,v,w</text></svg>
<span class="a t" id="t50" style="left:188.10px;top:865.88px;font-size:22px;line-height:29px;color:#000;letter-spacing:0.600px;">Dependent Variables 1</span>
<svg class="a" style="left:116px;top:909px;" width="18" height="12" viewBox="0 0 18 12"><path d="M1.5 1.5L9 9.5L16.5 1.5" fill="none" stroke="#7f7f7f" stroke-width="2.6"/></svg>
<svg class="a" style="left:152.3px;top:898.5px;" width="32" height="32" viewBox="0 0 32 32"><path d="M3 0V29H32" fill="none" stroke="#8a8a8a" stroke-width="1.8"/><path d="M0.5 3.5L3 0L5.5 3.5M28.5 26.5L32 29L28.5 31.5" fill="none" stroke="#8a8a8a" stroke-width="1.4"/><path d="M6 4C8 16 12 22 32 23" fill="none" stroke="#a9a9a9" stroke-width="1.6"/><path d="M6 23C12 22 13 4 17.5 4C22 4 22 18 32 18.5" fill="none" stroke="#3f9bbd" stroke-width="1.8"/><circle cx="24.5" cy="25.5" r="4.3" fill="none" stroke="#8c8c8c" stroke-width="3.4"/><path d="M24.5 18.5V32.5M17.5 25.5H31.5" stroke="#8c8c8c" stroke-width="3"/><circle cx="24.5" cy="25.5" r="1.8" fill="#fff"/></svg>
<span class="a t" id="t51" style="left:188.10px;top:899.88px;font-size:22px;line-height:29px;color:#000;letter-spacing:0.863px;">Time-Dependent Solver</span>
<svg class="a" style="left:180.3px;top:934px;" width="28" height="28" viewBox="0 0 28 28"><rect x="1.2" y="1.2" width="25.6" height="25.6" fill="#fff" stroke="#a9a9a9" stroke-width="2.4"/><path d="M2 2L26 26" stroke="#a9a9a9" stroke-width="3"/><rect x="12" y="4" width="3.4" height="3.4" fill="#a9a9a9"/><rect x="19.5" y="4" width="3.4" height="3.4" fill="#a9a9a9"/><rect x="17" y="10.5" width="3.4" height="3.4" fill="#a9a9a9"/><rect x="4" y="16" width="3.4" height="3.4" fill="#a9a9a9"/><rect x="12" y="21" width="3.4" height="3.4" fill="#a9a9a9"/></svg>
<span class="a t" id="t52" style="left:214.10px;top:933.88px;font-size:22px;line-height:29px;color:#9a9a9a;letter-spacing:0.990px;">Direct</span>
<svg class="a" style="left:183.8px;top:966px;" width="25" height="32" viewBox="0 0 25 32"><path d="M2 2L13 14" stroke="#4a9ab8" stroke-width="3.2"/><path d="M1 5L6 0" stroke="#4a9ab8" stroke-width="1.6"/><path d="M8 12L15 9L17 18H11Z" fill="#4a9ab8"/><path d="M15 12H19V23" fill="none" stroke="#4a9ab8" stroke-width="1.8"/><path d="M4 23H23V28" fill="none" stroke="#4a9ab8" stroke-width="1.8"/><rect x="0" y="28" width="24" height="3.4" fill="#4a9ab8"/></svg>
<span class="a t" id="t53" style="left:214.10px;top:967.88px;font-size:22px;line-height:29px;color:#000;letter-spacing:0.645px;">Advanced</span>
<svg class="a" style="left:178px;top:1000.5px;" width="30" height="30" viewBox="0 0 30 30"><path d="M15 0V10M10.5 5H19.5M15 20V29M10.5 25.5H19.5" stroke="#8a8a8a" stroke-width="1.6"/><path d="M11.5 6.5H18.5L15 10.5Z M11.5 25.5H18.5L15 30Z" fill="#8a8a8a"/><rect x="0" y="10" width="10" height="10" fill="#4a9ab8"/><rect x="10" y="10" width="10" height="10" fill="#8fc0e8"/><rect x="20" y="10" width="10" height="10" fill="#e8a54e"/></svg>
<span class="a t" id="t54" style="left:214.10px;top:1001.88px;font-size:22px;line-height:29px;color:#000;letter-spacing:0.471px;">Fully Coupled 1</span>
<svg class="a" style="left:180.3px;top:1036px;" width="28" height="28" viewBox="0 0 28 28"><rect x="1.2" y="1.2" width="25.6" height="25.6" fill="#fff" stroke="#4f8bc9" stroke-width="2.4"/><path d="M2 2L26 26" stroke="#4f8bc9" stroke-width="3"/><rect x="12" y="4" width="3.4" height="3.4" fill="#4f8bc9"/><rect x="19.5" y="4" width="3.4" height="3.4" fill="#4f8bc9"/><rect x="17" y="10.5" width="3.4" height="3.4" fill="#4f8bc9"/><rect x="4" y="16" width="3.4" height="3.4" fill="#4f8bc9"/><rect x="12" y="21" width="3.4" height="3.4" fill="#4f8bc9"/></svg>
<span class="a t" id="t55" style="left:214.10px;top:1035.88px;font-size:22px;line-height:29px;color:#000;letter-spacing:0.507px;">Direct 1</span>
<svg class="a" style="left:180.3px;top:1070px;" width="28" height="28" viewBox="0 0 28 28"><circle cx="14" cy="14" r="14" fill="#c8325f"/><path d="M8 8L20 20M20 8L8 20" stroke="#fff" stroke-width="2.2"/><rect x="11.5" y="11.5" width="5" height="5" fill="#fff"/></svg>
<span class="a t" id="t56" style="left:214.10px;top:1069.88px;font-size:22px;line-height:29px;color:#000;letter-spacing:0.177px;">Error 1</span>
<svg class="a" style="left:178px;top:1104px;" width="32" height="30" viewBox="0 0 32 30"><path d="M16 0.5L32 28.5V30H0V28.5Z" fill="#d9663f"/><rect x="14" y="9" width="4" height="11" fill="#fff"/><rect x="14" y="22.5" width="4" height="3.5" fill="#fff"/></svg>
<span class="a t" id="t57" style="left:214.10px;top:1103.88px;font-size:22px;line-height:29px;color:#000;letter-spacing:0.426px;">Warnings 1</span>
<svg class="a" style="left:43.5px;top:1144px;" width="12" height="18" viewBox="0 0 12 18"><path d="M1.5 1.5L9.5 9L1.5 16.5" fill="none" stroke="#7f7f7f" stroke-width="2.6"/></svg>
<svg class="a" style="left:74px;top:1136px;" width="32" height="31" viewBox="0 0 32 31"><rect x="4.8" y="0.8" width="17" height="15" fill="#fff" stroke="#8d8d92" stroke-width="1.6"/><rect x="8.8" y="4.8" width="17" height="15" fill="#fff" stroke="#8d8d92" stroke-width="1.6"/><rect x="12.8" y="8.8" width="17" height="15" fill="#fff" stroke="#8d8d92" stroke-width="1.6"/><rect x="15" y="11" width="12" height="11" fill="#a85aa0" stroke="#d9b5d6" stroke-width="1"/><path d="M12 25H31V30H10L1 22V17L12 25Z" fill="#fff" stroke="#8d8d92" stroke-width="1.6"/><path d="M1 17L10 25M1 20L10 28" stroke="#8d8d92" stroke-width="1.2"/></svg>
<span class="a t" id="t58" style="left:110.30px;top:1137.88px;font-size:22px;line-height:29px;color:#000;letter-spacing:0.452px;">Results</span>
<svg class="a" style="left:530px;top:150px" width="1400" height="1270" viewBox="530 150 1400 1270"><defs><linearGradient id="tg" x1="0" y1="0" x2="0" y2="1"><stop offset="0" stop-color="#fdfdff"/><stop offset="0.45" stop-color="#f3f7fd"/><stop offset="1" stop-color="#d9e6f7"/></linearGradient></defs><path d="M535.5 1420V171Q535.5 159 547.5 159H1901Q1913 159 1913 171V1420Z" fill="#fafbfe"/><path d="M536.5 206V171Q536.5 160 547.5 160H655C664 160 669 163 676.7 171 L707.6 200.6 C713 206 716 206 723 206Z" fill="url(#tg)"/><rect x="536.5" y="206" width="1376" height="4" fill="#dde8f6"/><rect x="536.5" y="206" width="4" height="1214" fill="#dde8f6"/><rect x="1908" y="206" width="4" height="1214" fill="#dde8f6"/><path d="M535.5 1420V171Q535.5 159 547.5 159H1901Q1913 159 1913 171V1420" fill="none" stroke="#a3a3a3" stroke-width="2"/><path d="M655 159C664 159 669 162 676.7 170 L707.6 199.6 C713 205 716 205 723 205H1913" fill="none" stroke="#a3a3a3" stroke-width="2"/></svg>
<svg class="a" style="left:546px;top:166px;" width="24" height="30" viewBox="0 0 24 30"><rect x="1" y="1" width="22" height="27" fill="#fff" stroke="#9a9a9a" stroke-width="2"/><rect x="1" y="1" width="22" height="4" fill="#c9c9c9"/><rect x="1" y="14" width="22" height="3.5" fill="#b5b5b5"/><path d="M6 9.5H17M6 22H17" stroke="#4f8bc9" stroke-width="1.8"/></svg>
<span class="a t" id="t59" style="left:582.10px;top:170.28px;font-size:22px;line-height:29px;color:#000;letter-spacing:0.960px;">Settings</span>
<svg class="a" style="left:1826px;top:168px;" width="70" height="26" viewBox="0 0 70 26"><rect x="1" y="3" width="18" height="6" fill="none" stroke="#000" stroke-width="2"/><rect x="45" y="3" width="18" height="18" fill="none" stroke="#000" stroke-width="2"/><path d="M45 6.6H63" stroke="#000" stroke-width="2"/></svg>
<span class="a t" id="t60" style="left:548.00px;top:209.48px;font-size:22px;line-height:29px;color:#000;letter-spacing:0.718px;">Variables</span>
<span class="a t" id="t61" style="left:564.10px;top:265.88px;font-size:22px;line-height:29px;color:#000;letter-spacing:0.536px;">Label:</span>
<div class="a" style="left:638px;top:260px;width:1254px;height:44px;background:#fff;border:6px solid #92aef2;border-radius:8px;box-sizing:border-box;box-shadow:inset 0 0 0 1px #7d98dc;"></div>
<div class="a" style="left:650px;top:268px;width:113px;height:28px;background:#b9d5fb;"></div>
<span class="a t" id="t62" style="left:650.30px;top:267.48px;font-size:22px;line-height:29px;color:#000;letter-spacing:0.339px;">Variables 1</span>
<div class="a" style="left:550px;top:320.5px;width:1346px;height:44px;border:1.5px solid #e3e9f5;border-radius:5px;box-sizing:border-box;border-bottom:none;background:linear-gradient(#fdfdff 0px,#fdfdff 2px,rgba(253,253,255,0) 3px);-webkit-mask-image:linear-gradient(#000 0%,#000 40%,transparent 100%);"></div>
<div class="a" style="left:553px;top:324px;width:1341px;height:38px;background:linear-gradient(#e2e8f3 0%, #e7ecf5 35%, #f1f4fa 70%, #fafbfe 100%);"></div>
<div class="a" style="left:562px;top:332px;width:22px;height:22px;background:#ecf0f7;"></div>
<div class="a" style="left:562px;top:345px;width:22px;height:9px;background:#dfe6f1;"></div>
<svg class="a" style="left:564px;top:337.7px;" width="16" height="8" viewBox="0 0 16 8"><path d="M0 0H16L8 8Z" fill="#8c8c8c"/></svg>
<span class="a t" id="t63" style="left:596.30px;top:325.88px;font-size:22px;line-height:29px;color:#000;letter-spacing:0.636px;">Variables</span>
<div class="a" style="left:582.5px;top:386px;width:1282.5px;height:680px;background:#fafbfe;border:2px solid #e3e3e6;box-sizing:border-box;"></div>
<div class="a" style="left:584.5px;top:443px;width:1278.5px;height:622px;overflow:hidden;">
<div class="a" style="left:695.5px;top:-35px;width:118px;height:60px;background:#f1f1f1;"></div>
<div class="a" style="left:695.5px;top:27px;width:118px;height:60px;background:#f1f1f1;"></div>
<div class="a" style="left:695.5px;top:89px;width:118px;height:60px;background:#f1f1f1;"></div>
<div class="a" style="left:695.5px;top:151px;width:118px;height:60px;background:#f1f1f1;"></div>
<div class="a" style="left:695.5px;top:213px;width:118px;height:60px;background:#f1f1f1;"></div>
<div class="a" style="left:695.5px;top:275px;width:118px;height:60px;background:#f1f1f1;"></div>
<div class="a" style="left:695.5px;top:337px;width:118px;height:60px;background:#f1f1f1;"></div>
<div class="a" style="left:695.5px;top:399px;width:118px;height:60px;background:#f1f1f1;"></div>
<div class="a" style="left:695.5px;top:461px;width:118px;height:60px;background:#f1f1f1;"></div>
<div class="a" style="left:695.5px;top:523px;width:118px;height:60px;background:#f1f1f1;"></div>
<div class="a" style="left:695.5px;top:585px;width:118px;height:60px;background:#f1f1f1;"></div>
<div class="a" style="left:139.5px;top:89px;width:554px;height:60px;background:#b9d5fb;"></div>
<div class="a" style="left:137px;top:0px;width:2px;height:700px;background:#e0e0e4;"></div>
<div class="a" style="left:693.3px;top:0px;width:2px;height:700px;background:#e0e0e4;"></div>
<div class="a" style="left:813.5px;top:0px;width:2px;height:700px;background:#e0e0e4;"></div>
<div class="a" style="left:1165px;top:0px;width:2px;height:700px;background:#e0e0e4;"></div>
<span class="a t" id="t64" style="left:3.80px;top:-19.12px;font-size:22px;line-height:29px;color:#000;letter-spacing:-0.400px;">p</span>
<span class="a t" id="t65" style="left:143.30px;top:-19.12px;font-size:22px;line-height:29px;color:#000;letter-spacing:1.173px;">10[torr]</span>
<span class="a t" id="t66" style="left:699.80px;top:-19.12px;font-size:22px;line-height:29px;color:#000;letter-spacing:-0.400px;">Pa</span>
<span class="a t" id="t67" style="left:819.40px;top:-19.12px;font-size:22px;line-height:29px;color:#000;letter-spacing:0.522px;">Gas Pressure</span>
<span class="a t" id="t68" style="left:3.80px;top:42.88px;font-size:22px;line-height:29px;color:#000;letter-spacing:0.600px;">Nn0</span>
<span class="a t" id="t69" style="left:143.30px;top:42.88px;font-size:22px;line-height:29px;color:#000;letter-spacing:0.829px;">p/k_B_const/T</span>
<span class="a t" id="t70" style="left:699.80px;top:42.88px;font-size:22px;line-height:29px;color:#000;letter-spacing:0.286px;">1/m³</span>
<span class="a t" id="t71" style="left:819.40px;top:42.88px;font-size:22px;line-height:29px;color:#000;letter-spacing:0.863px;">Neutral number density</span>
<span class="a t" id="t72" style="left:3.80px;top:104.88px;font-size:22px;line-height:29px;color:#000;letter-spacing:-0.400px;">k1</span>
<span class="a t" id="t73" style="left:143.30px;top:104.88px;font-size:22px;line-height:29px;color:#c4923a;letter-spacing:0.968px;">1.993039e-014*dd.Te^0.93*exp(-0.41/dd.Te)</span>
<span class="a t" id="t74" style="left:819.40px;top:92.88px;font-size:22px;line-height:29px;color:#000;letter-spacing:0.641px;">Elastic rate</span>
<span class="a t" id="t75" style="left:819.40px;top:118.88px;font-size:22px;line-height:29px;color:#000;letter-spacing:1.261px;">coefficient</span>
<span class="a t" id="t76" style="left:3.80px;top:166.88px;font-size:22px;line-height:29px;color:#000;letter-spacing:0.600px;">k2</span>
<span class="a t" id="t77" style="left:143.30px;top:166.88px;font-size:22px;line-height:29px;color:#c4923a;letter-spacing:0.874px;">8.773932e-015*dd.Te^0.62*<span style="font-family:'DejaVu Sans',sans-serif;font-size:26px;line-height:0;letter-spacing:0;-webkit-text-stroke:0">&#8629;</span>exp(-18.16/dd.Te)</span>
<span class="a t" id="t78" style="left:819.40px;top:154.88px;font-size:22px;line-height:29px;color:#000;letter-spacing:0.751px;">Excitation rate</span>
<span class="a t" id="t79" style="left:819.40px;top:180.88px;font-size:22px;line-height:29px;color:#000;letter-spacing:1.261px;">coefficient</span>
<span class="a t" id="t80" style="left:3.80px;top:228.88px;font-size:22px;line-height:29px;color:#000;letter-spacing:0.600px;">k3</span>
<span class="a t" id="t81" style="left:143.30px;top:228.88px;font-size:22px;line-height:29px;color:#c4923a;letter-spacing:0.897px;">2.153106e-014*dd.Te^0.49*<span style="font-family:'DejaVu Sans',sans-serif;font-size:26px;line-height:0;letter-spacing:0;-webkit-text-stroke:0">&#8629;</span>exp(-24.75/dd.Te)</span>
<span class="a t" id="t82" style="left:819.40px;top:216.88px;font-size:22px;line-height:29px;color:#000;letter-spacing:0.765px;">Ionization rate</span>
<span class="a t" id="t83" style="left:819.40px;top:242.88px;font-size:22px;line-height:29px;color:#000;letter-spacing:1.261px;">coefficient</span>
<span class="a t" id="t84" style="left:3.80px;top:290.88px;font-size:22px;line-height:29px;color:#000;letter-spacing:-0.400px;">r1</span>
<span class="a t" id="t85" style="left:143.30px;top:290.88px;font-size:22px;line-height:29px;color:#c4923a;letter-spacing:0.917px;">k1*dd.Nn*dd.ne</span>
<span class="a t" id="t86" style="left:819.40px;top:278.88px;font-size:22px;line-height:29px;color:#000;letter-spacing:0.723px;">Elastic collision</span>
<span class="a t" id="t87" style="left:819.40px;top:304.88px;font-size:22px;line-height:29px;color:#000;letter-spacing:0.896px;">reaction rate</span>
<span class="a t" id="t88" style="left:3.80px;top:352.88px;font-size:22px;line-height:29px;color:#000;letter-spacing:0.600px;">r2</span>
<span class="a t" id="t89" style="left:143.30px;top:352.88px;font-size:22px;line-height:29px;color:#c4923a;letter-spacing:1.139px;">k2*dd.Nn*dd.ne</span>
<span class="a t" id="t90" style="left:819.40px;top:340.88px;font-size:22px;line-height:29px;color:#000;letter-spacing:0.822px;">Electronic excitation</span>
<span class="a t" id="t91" style="left:819.40px;top:366.88px;font-size:22px;line-height:29px;color:#000;letter-spacing:0.896px;">reaction rate</span>
<span class="a t" id="t92" style="left:3.80px;top:414.88px;font-size:22px;line-height:29px;color:#000;letter-spacing:0.600px;">r3</span>
<span class="a t" id="t93" style="left:143.30px;top:414.88px;font-size:22px;line-height:29px;color:#c4923a;letter-spacing:1.176px;">k3*dd.Nn*dd.ne</span>
<span class="a t" id="t94" style="left:819.40px;top:402.88px;font-size:22px;line-height:29px;color:#000;letter-spacing:0.824px;">Ionization reaction</span>
<span class="a t" id="t95" style="left:819.40px;top:428.88px;font-size:22px;line-height:29px;color:#000;letter-spacing:0.879px;">rate</span>
<span class="a t" id="t96" style="left:3.80px;top:476.88px;font-size:22px;line-height:29px;color:#000;letter-spacing:-0.247px;">de1</span>
<span class="a t" id="t97" style="left:143.30px;top:476.88px;font-size:22px;line-height:29px;color:#000;letter-spacing:1.600px;">0[V]</span>
<span class="a t" id="t98" style="left:699.80px;top:476.88px;font-size:22px;line-height:29px;color:#000;letter-spacing:0.600px;">V</span>
<span class="a t" id="t99" style="left:819.40px;top:464.88px;font-size:22px;line-height:29px;color:#000;letter-spacing:0.665px;">Energy loss, elastic</span>
<span class="a t" id="t100" style="left:819.40px;top:490.88px;font-size:22px;line-height:29px;color:#000;letter-spacing:0.851px;">collision</span>
<span class="a t" id="t101" style="left:3.80px;top:538.88px;font-size:22px;line-height:29px;color:#000;letter-spacing:0.600px;">de2</span>
<span class="a t" id="t102" style="left:143.30px;top:538.88px;font-size:22px;line-height:29px;color:#000;letter-spacing:0.596px;">11.56[V]</span>
<span class="a t" id="t103" style="left:699.80px;top:538.88px;font-size:22px;line-height:29px;color:#000;letter-spacing:0.600px;">V</span>
<span class="a t" id="t104" style="left:819.40px;top:526.88px;font-size:22px;line-height:29px;color:#000;letter-spacing:0.473px;">Energy loss,</span>
<span class="a t" id="t105" style="left:819.40px;top:552.88px;font-size:22px;line-height:29px;color:#000;letter-spacing:0.906px;">electronic excitation</span>
<span class="a t" id="t106" style="left:3.80px;top:600.88px;font-size:22px;line-height:29px;color:#000;letter-spacing:0.600px;">de3</span>
<span class="a t" id="t107" style="left:143.30px;top:600.88px;font-size:22px;line-height:29px;color:#000;letter-spacing:0.659px;">15.8[V]</span>
<span class="a t" id="t108" style="left:699.80px;top:600.88px;font-size:22px;line-height:29px;color:#000;letter-spacing:0.600px;">V</span>
<span class="a t" id="t109" style="left:819.40px;top:588.88px;font-size:22px;line-height:29px;color:#000;letter-spacing:0.473px;">Energy loss,</span>
<span class="a t" id="t110" style="left:819.40px;top:614.88px;font-size:22px;line-height:29px;color:#000;letter-spacing:0.163px;">ionization</span>
</div>
<div class="a" style="left:584.5px;top:388px;width:1278.5px;height:54px;background:#fdfdfe;"></div>
<div class="a" style="left:584.5px;top:442px;width:1278.5px;height:2px;background:#e2e2e5;"></div>
<div class="a" style="left:721.5px;top:400px;width:2px;height:31px;background:#dcdcdf;"></div>
<div class="a" style="left:1277.8px;top:400px;width:2px;height:31px;background:#dcdcdf;"></div>
<div class="a" style="left:1398px;top:400px;width:2px;height:31px;background:#dcdcdf;"></div>
<div class="a" style="left:1749.5px;top:400px;width:2px;height:31px;background:#dcdcdf;"></div>
<span class="a t" id="t111" style="left:588.30px;top:402.38px;font-size:22px;line-height:29px;color:#000;letter-spacing:0.346px;">Name</span>
<span class="a t" id="t112" style="left:727.80px;top:402.38px;font-size:22px;line-height:29px;color:#000;letter-spacing:0.522px;">Expression</span>
<span class="a t" id="t113" style="left:1284.30px;top:402.38px;font-size:22px;line-height:29px;color:#000;letter-spacing:0.850px;">Unit</span>
<span class="a t" id="t114" style="left:1403.90px;top:402.38px;font-size:22px;line-height:29px;color:#000;letter-spacing:0.967px;">Description</span>
<svg class="a" style="left:585px;top:1094px;" width="16" height="29" viewBox="0 0 16 29"><path d="M8 0L1 10.5H7V28.5H9V10.5H15Z" fill="#4f8bc9"/></svg>
<svg class="a" style="left:629px;top:1094px;" width="16" height="29" viewBox="0 0 16 29"><path d="M8 28.5L1 18H7V0H9V18H15Z" fill="#4f8bc9"/></svg>
<svg class="a" style="left:665px;top:1093px;" width="34" height="30" viewBox="0 0 34 30"><rect x="1" y="1" width="16" height="28" fill="none" stroke="#777" stroke-width="1.6" stroke-dasharray="4 2.5"/><rect x="15" y="1" width="17" height="28" fill="#bcd3ee" stroke="#4f8bc9" stroke-width="2"/><path d="M6 15H22M17 9.5L23 15L17 20.5" fill="none" stroke="#4f8bc9" stroke-width="2.2"/></svg>
<svg class="a" style="left:704px;top:1105px;" width="10" height="8" viewBox="0 0 10 8"><path d="M0 0H10L5 8Z" fill="#000"/></svg>
<svg class="a" style="left:728px;top:1093px;" width="32" height="32" viewBox="0 0 32 32"><rect x="0" y="1.3" width="4.7" height="3.6" fill="#b4b4b4"/><rect x="7" y="1.3" width="21.5" height="3.6" fill="#b4b4b4"/><rect x="0" y="11" width="4.7" height="3.6" fill="#4f8bc9"/><rect x="7" y="11" width="21.5" height="3.6" fill="#4f8bc9"/><rect x="0" y="21" width="4.7" height="3.6" fill="#b4b4b4"/><rect x="7" y="21" width="13" height="3.6" fill="#b4b4b4"/><path d="M23.8 17.4V29.3M17.8 23.35H29.7" stroke="#4f8bc9" stroke-width="3.2"/></svg>
<svg class="a" style="left:771px;top:1093px;" width="32" height="32" viewBox="0 0 32 32"><rect x="1" y="1.3" width="4.7" height="3.6" fill="#b4b4b4"/><rect x="8" y="1.3" width="21" height="3.6" fill="#b4b4b4"/><rect x="1" y="11" width="4.7" height="3.6" fill="#b4b4b4"/><rect x="8" y="11" width="21" height="3.6" fill="#b4b4b4"/><rect x="1" y="21" width="4.7" height="3.6" fill="#4f8bc9"/><rect x="8" y="21" width="8.4" height="3.6" fill="#4f8bc9"/><path d="M19.3 19.5L29 29.3M29 19.5L19.3 29.3" stroke="#4f8bc9" stroke-width="2.6"/></svg>
<svg class="a" style="left:818px;top:1092px;" width="26" height="32" viewBox="0 0 26 32"><path d="M3 1L12 17" stroke="#7d7d7d" stroke-width="2.6"/><path d="M9 18L15 14L23 26C21 30 15 32 11 30C11 26 10 22 9 18Z" fill="#e8b070"/><path d="M14 20L18 29M18 18L22 27" stroke="#f4c98c" stroke-width="1.2"/></svg>
<svg class="a" style="left:857px;top:1095px;" width="34" height="28" viewBox="0 0 34 28"><path d="M0.5 26V2H10L13 6H25V11H8.5Z" fill="#e8a04a"/><path d="M2.5 26L10 12H33L25.5 26Z" fill="#e8a04a"/></svg>
<svg class="a" style="left:896px;top:1105px;" width="10" height="8" viewBox="0 0 10 8"><path d="M0 0H10L5 8Z" fill="#000"/></svg>
<svg class="a" style="left:919px;top:1093px;" width="30" height="31" viewBox="1 2 30 30"><path d="M3.5 4.5H28.5V27L25 30.5H7L3.5 27Z" fill="#fff" stroke="#4f8bc9" stroke-width="2.6"/><rect x="9" y="4" width="14" height="11" fill="#fff" stroke="#4f8bc9" stroke-width="2"/><rect x="9" y="23" width="14" height="7" fill="#4f8bc9"/><rect x="12" y="25.5" width="7" height="4" fill="#fff"/></svg>
<svg class="a" style="left:961px;top:1092px;" width="34" height="33" viewBox="0 0 34 33"><rect x="1" y="9" width="22" height="14" fill="#fff" stroke="#4f8bc9" stroke-width="2"/><rect x="5" y="13" width="4" height="6" fill="#4f8bc9"/><rect x="11" y="13" width="4" height="6" fill="#4f8bc9"/><path d="M22 1V32M16 1H28M16 32H28" stroke="#4f8bc9" stroke-width="2"/><path d="M23 9H32V23H23" fill="none" stroke="#4f8bc9" stroke-width="2"/></svg>
<svg class="a" style="left:1000px;top:1105px;" width="10" height="8" viewBox="0 0 10 8"><path d="M0 0H10L5 8Z" fill="#000"/></svg>
<span class="a t" id="t115" style="left:576.30px;top:1140.18px;font-size:22px;line-height:29px;color:#000;letter-spacing:0.445px;">Name:</span>
<div class="a" style="left:573px;top:1181px;width:1302px;height:34px;background:#fff;border:1px solid #e2e2e5;box-sizing:border-box;border-bottom:2px solid #d2d2d5;"></div>
<span class="a t" id="t116" style="left:579.80px;top:1183.58px;font-size:22px;line-height:29px;color:#000;letter-spacing:-0.400px;">k1</span>
<span class="a t" id="t117" style="left:576.30px;top:1225.88px;font-size:22px;line-height:29px;color:#000;letter-spacing:0.481px;">Expression:</span>
<div class="a" style="left:572px;top:1265px;width:1304px;height:170px;background:#fff;border:2px solid #e2e3e8;box-sizing:border-box;"></div>
<span class="a t" id="t118" style="left:573.60px;top:1266.38px;font-size:22px;line-height:29px;color:#000;letter-spacing:1.022px;"><span style="color:#8466d8">1.993039e-014</span>*<i>dd.</i>Te^<span style="color:#8466d8">0.93</span>*<b style="color:#2c5c9c">exp</b>(-<span style="color:#8466d8">0.41</span>/<i>dd.</i>Te)</span>
<svg class="a" style="left:1916px;top:150px" width="20" height="1270" viewBox="1916 150 20 1270"><path d="M1923 1330V171Q1923 159 1935 159H1940" fill="#fafbfe" stroke="#a3a3a3" stroke-width="2"/><rect x="1925" y="353" width="12" height="976" fill="#fff"/><path d="M1925 352.5H1940" stroke="#dcdcdf" stroke-width="1.5"/><path d="M1923 1329H1940" stroke="#a3a3a3" stroke-width="2"/><circle cx="1940" cy="188" r="8" fill="#3fa7c6"/><rect x="1932" y="272" width="6" height="15" fill="#4f8bc9"/><path d="M1932 932H1940" stroke="#333" stroke-width="1.5"/><path d="M1932 997H1940" stroke="#333" stroke-width="1.5"/><path d="M1932 1065.5H1940" stroke="#333" stroke-width="1.5"/><path d="M1932 1134H1940" stroke="#333" stroke-width="1.5"/><path d="M1932 1202.5H1940" stroke="#333" stroke-width="1.5"/><path d="M1932 1267.5H1940" stroke="#333" stroke-width="1.5"/><path d="M1923 1420V1352Q1923 1340 1935 1340H1940" fill="#fafbfe" stroke="#a3a3a3" stroke-width="2"/><rect x="1931" y="1351" width="8" height="20" fill="#dce8f6" stroke="#4f8bc9" stroke-width="2"/></svg>
</div>
</body></html>
